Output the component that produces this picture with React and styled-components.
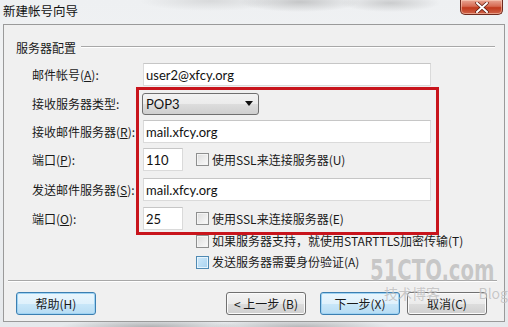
import React from "react";
import styled, { createGlobalStyle } from "styled-components";

const GlobalStyle = createGlobalStyle`
  html, body { margin: 0; padding: 0; background: #e4e8ec; }
  body { font-family: "Noto Sans CJK SC", "Noto Sans", sans-serif; }
`;

const Window = styled.div`
  position: relative;
  width: 508px;
  height: 327px;
  overflow: hidden;
  display: flex;
  flex-direction: column;
  background:
    radial-gradient(ellipse 60px 10px at 300px 2px, rgba(120,120,120,0.35), transparent),
    radial-gradient(ellipse 50px 9px at 390px 3px, rgba(120,120,120,0.3), transparent),
    radial-gradient(ellipse 70px 10px at 210px 1px, rgba(150,150,150,0.25), transparent),
    radial-gradient(ellipse 90px 8px at 150px 327px, rgba(110,110,110,0.45), transparent),
    radial-gradient(ellipse 90px 8px at 300px 327px, rgba(110,110,110,0.4), transparent),
    linear-gradient(#eef0f2, #f2f3f4 30%, #e6e9ec);
`;

const TitleBar = styled.div`
  height: 24px;
  display: flex;
  justify-content: space-between;
  align-items: flex-start;
  padding-left: 3px;
`;

const Title = styled.div`
  font-size: 12.5px;
  line-height: 22px;
  color: #111;
`;

const CloseButton = styled.div`
  width: 43px;
  height: 15px;
  margin-right: 5px;
  box-sizing: border-box;
  border: 1px solid #6e2a1e;
  border-top: none;
  border-radius: 0 0 5px 5px;
  background: linear-gradient(#e9a594 0%, #d66a52 45%, #c1391c 55%, #d0644a 100%);
  box-shadow: inset 0 0 0 1px rgba(255, 220, 200, 0.5);
  display: flex;
  align-items: center;
  justify-content: center;
`;

const Client = styled.div`
  flex: 1;
  margin: 0 3px 5px 3px;
  box-sizing: border-box;
  border: 1px solid #9a9a9a;
  background: #f0f0f0;
  display: flex;
  flex-direction: column;
`;

const GroupHeader = styled.div`
  display: flex;
  align-items: center;
  gap: 5px;
  margin: 14px 9px 0 12px;
  height: 16px;
  font-size: 12px;
  color: #1a1a1a;
`;

const HeaderLine = styled.div`
  flex: 1;
  height: 0;
  border-top: 1px solid #a8a8a8;
  border-bottom: 1px solid #ffffff;
`;

const Form = styled.div`
  display: flex;
  flex-direction: column;
  padding-left: 28px;
`;

const Row = styled.div`
  display: grid;
  grid-template-columns: 111px auto;
  align-items: center;
  height: ${(p) => p.$h || 23}px;
  margin-top: ${(p) => p.$top}px;
`;

const Label = styled.div`
  font-size: 12px;
  line-height: 16px;
  color: #1a1a1a;
  white-space: nowrap;
`;

const Field = styled.div`
  display: flex;
  align-items: center;
  padding-left: ${(p) => p.$indent || 0}px;
`;

const TextBox = styled.div`
  box-sizing: border-box;
  width: ${(p) => p.$w}px;
  height: ${(p) => p.$h || 23}px;
  background: #ffffff;
  border: 1px solid #dadada;
  border-top-color: #c6c6c6;
  padding-left: 2px;
  display: flex;
  align-items: center;
  font-family: "Lato", "Open Sans", sans-serif;
  font-size: 13px;
  color: #111;
`;

const Select = styled.div`
  box-sizing: border-box;
  width: 117px;
  height: 22px;
  margin-left: -1px;
  border: 1px solid #707070;
  border-radius: 3px;
  background: linear-gradient(#f3f3f3 0%, #ebebeb 50%, #dddddd 51%, #cfcfcf 100%);
  display: flex;
  align-items: center;
  justify-content: space-between;
  padding: 0 5px 0 3px;
  font-family: "Lato", "Open Sans", sans-serif;
  font-size: 13px;
  color: #111;
`;

const Check = styled.div`
  display: flex;
  align-items: center;
  gap: 3px;
  margin-left: ${(p) => p.$ml || 0}px;
  font-size: 12px;
  line-height: 16px;
  color: #1a1a1a;
  white-space: nowrap;
`;

const Box = styled.span`
  display: inline-block;
  box-sizing: border-box;
  width: 13px;
  height: 13px;
  border: 1px solid ${(p) => (p.$hot ? "#4f8ab3" : "#8e8f8f")};
  background: ${(p) =>
    p.$hot
      ? "linear-gradient(135deg, #cfe9fa, #a8d3f0)"
      : "linear-gradient(135deg, #dcdcdc, #fbfbfb)"};
  box-shadow: inset 0 0 0 1px ${(p) => (p.$hot ? "#e6f4fd" : "#f4f4f4")};
`;

const Separator = styled.div`
  margin: ${(p) => p.$top}px 7px 0 4px;
  border-top: 1px solid #a8a8a8;
  border-bottom: 1px solid #ffffff;
`;

const Footer = styled.div`
  display: flex;
  justify-content: space-between;
  margin-top: 10px;
  padding: 0 17px 0 12px;
`;

const ButtonGroup = styled.div`
  display: flex;
`;

const Button = styled.div`
  box-sizing: border-box;
  width: 80px;
  height: 23px;
  margin-left: ${(p) => p.$ml || 0}px;
  border-radius: 3px;
  border: 1px solid ${(p) => (p.$blue ? "#3c7fb1" : "#707070")};
  background: ${(p) =>
    p.$blue
      ? "linear-gradient(#eaf6fd 0%, #dff1fc 50%, #c9e7f9 51%, #b7dcf3 100%)"
      : "linear-gradient(#f3f3f3 0%, #ebebeb 50%, #dddddd 51%, #cfcfcf 100%)"};
  box-shadow: inset 0 0 0 1px ${(p) => (p.$blue ? "#9fd3f3" : "#fbfbfb")};
  display: flex;
  align-items: center;
  justify-content: center;
  font-size: 12px;
  color: #1a1a1a;
`;

const RedFrame = styled.div`
  position: absolute;
  left: 136px;
  top: 87px;
  width: 303px;
  height: 148px;
  box-sizing: border-box;
  border: 3px solid #c8141c;
  pointer-events: none;
`;

const Watermark = styled.div`
  position: absolute;
  left: 370px;
  top: 256px;
  width: 138px;
  pointer-events: none;
  color: rgba(165, 165, 165, 0.6);
  text-shadow: 0 0 1px rgba(255, 255, 255, 0.7);
`;

const WmBig = styled.div`
  font-family: "DejaVu Sans Condensed", "DejaVu Sans", sans-serif;
  font-weight: bold;
  font-size: 28px;
  line-height: 30px;
  white-space: nowrap;
  transform: scaleX(0.78);
  transform-origin: left center;
`;

const WmSmall = styled.div`
  display: flex;
  justify-content: space-between;
  font-size: 14px;
  line-height: 15px;
  padding: 0 0 0 14px;
`;

const U = styled.span`
  text-decoration: underline;
`;

export default function App() {
  return (
    <>
      <GlobalStyle />
      <Window>
        <TitleBar>
          <Title>新建帐号向导</Title>
          <CloseButton>
            <svg width="14" height="11" viewBox="0 0 14 11">
              <path d="M2 1 L12 10 M12 1 L2 10" stroke="#5a1a10" strokeWidth="3.4" strokeLinecap="round" />
              <path d="M2 1 L12 10 M12 1 L2 10" stroke="#ffffff" strokeWidth="2" strokeLinecap="round" />
            </svg>
          </CloseButton>
        </TitleBar>
        <Client>
          <GroupHeader>
            <span>服务器配置</span>
            <HeaderLine />
          </GroupHeader>
          <Form>
            <Row $top={8}>
              <Label>邮件帐号(<U>A</U>):</Label>
              <Field><TextBox $w={288}>user2@xfcy.org</TextBox></Field>
            </Row>
            <Row $top={6}>
              <Label>接收服务器类型:</Label>
              <Field>
                <Select>
                  <span>POP3</span>
                  <svg width="8" height="5" viewBox="0 0 8 5"><path d="M0 0 H8 L4 5 Z" fill="#111" /></svg>
                </Select>
              </Field>
            </Row>
            <Row $top={5}>
              <Label>接收邮件服务器(<U>R</U>):</Label>
              <Field><TextBox $w={288}>mail.xfcy.org</TextBox></Field>
            </Row>
            <Row $top={5}>
              <Label>端口(<U>P</U>):</Label>
              <Field>
                <TextBox $w={40}>110</TextBox>
                <Check $ml={13}><Box />使用SSL来连接服务器(U)</Check>
              </Field>
            </Row>
            <Row $top={7}>
              <Label>发送邮件服务器(<U>S</U>):</Label>
              <Field><TextBox $w={288}>mail.xfcy.org</TextBox></Field>
            </Row>
            <Row $top={6}>
              <Label>端口(<U>O</U>):</Label>
              <Field>
                <TextBox $w={40}>25</TextBox>
                <Check $ml={13}><Box />使用SSL来连接服务器(E)</Check>
              </Field>
            </Row>
            <Row $top={3} $h={16}>
              <span />
              <Field $indent={53}>
                <Check><Box />如果服务器支持，就使用STARTTLS加密传输(T)</Check>
              </Field>
            </Row>
            <Row $top={5} $h={16}>
              <span />
              <Field $indent={53}>
                <Check><Box $hot />发送服务器需要身份验证(A)</Check>
              </Field>
            </Row>
          </Form>
          <Separator $top={10} />
          <Footer>
            <Button $blue>帮助(H)</Button>
            <ButtonGroup>
              <Button>&lt; 上一步 (B)</Button>
              <Button $blue $ml={14}>下一步(X)</Button>
              <Button $ml={7}>取消(C)</Button>
            </ButtonGroup>
          </Footer>
        </Client>
        <RedFrame />
        <Watermark>
          <WmBig>51CTO.com</WmBig>
          <WmSmall><span>技术博客</span><span>Blog</span></WmSmall>
        </Watermark>
      </Window>
    </>
  );
}
